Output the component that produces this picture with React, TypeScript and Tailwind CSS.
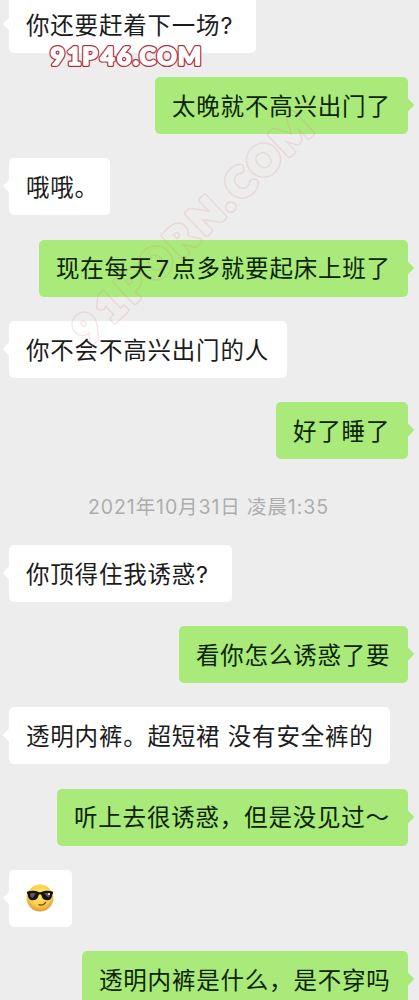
import clsx from 'clsx';

interface Message {
  id: number;
  mine?: boolean;
  text?: string;
  width: string;
}

const earlier: Message[] = [
  { id: 1, text: '你还要赶着下一场?', width: 'w-[247px]' },
  { id: 2, mine: true, text: '太晚就不高兴出门了', width: 'w-[253px]' },
  { id: 3, text: '哦哦。', width: 'w-[101px]' },
  { id: 4, mine: true, text: '现在每天7点多就要起床上班了', width: 'w-[369px]' },
  { id: 5, text: '你不会不高兴出门的人', width: 'w-[278px]' },
  { id: 6, mine: true, text: '好了睡了', width: 'w-[132px]' },
];

const later: Message[] = [
  { id: 7, text: '你顶得住我诱惑?', width: 'w-[223px]' },
  { id: 8, mine: true, text: '看你怎么诱惑了要', width: 'w-[229px]' },
  { id: 9, text: '透明内裤。超短裙 没有安全裤的', width: 'w-[381px]' },
  { id: 10, mine: true, text: '听上去很诱惑，但是没见过～', width: 'w-[351px]' },
  { id: 11, width: 'w-[63px]' },
  { id: 12, mine: true, text: '透明内裤是什么，是不穿吗', width: 'w-[326px]' },
];

function CoolFace() {
  return (
    <svg viewBox="0 0 28 28" className="size-7" role="img" aria-label="cool">
      <defs>
        <radialGradient id="face" cx="50%" cy="38%" r="62%">
          <stop offset="0%" stopColor="#ffe873" />
          <stop offset="65%" stopColor="#fad04b" />
          <stop offset="100%" stopColor="#e0973a" />
        </radialGradient>
      </defs>
      <circle cx="14" cy="14" r="13.4" fill="url(#face)" />
      <path d="M13 20.6c2.6 1 5.2.2 6.6-2.2" fill="none" stroke="#7a4a12" strokeWidth="1.3" strokeLinecap="round" />
      <path
        d="M1 7.8c4-1.3 8.5-1.2 11.5.1 1 .4 2 .4 3 0 3-1.3 7.5-1.4 11.5-.1v2l-.9.6c-.2 3.8-1.7 5.8-5.3 5.8-3.4 0-4.8-2.2-5.5-5.2-.3-.9-2.3-.9-2.6 0-.7 3-2.1 5.2-5.5 5.2-3.6 0-5.1-2-5.3-5.8L1 9.8z"
        fill="#15130f"
      />
      <path d="M4 9.5c2-.6 4-.6 6 .1l-3.5 4.6C4.8 13.7 4 12 4 9.5z" fill="#5c5a57" />
      <path d="M18 9.5c2-.6 4-.6 6-.1 0 2-.5 3.5-1.6 4.2z" fill="#5c5a57" />
      <circle cx="23" cy="10" r="1" fill="#fff" />
    </svg>
  );
}

function Tail({ mine }: { mine?: boolean }) {
  return (
    <svg
      viewBox="0 0 8 16"
      className={clsx('absolute top-[20px] h-4 w-2', mine ? '-right-[7px]' : '-left-[7px] rotate-180')}
    >
      <path d="M0 0.5L6.6 7.2Q7.4 8 6.6 8.8L0 15.5z" fill={mine ? '#a9ea7a' : '#ffffff'} />
    </svg>
  );
}

function Bubble({ mine, text, width }: Message) {
  return (
    <div className={clsx('flex', mine ? 'justify-end' : 'justify-start')}>
      <div
        className={clsx(
          'relative flex h-[57px] shrink-0 items-center rounded-[5px] pl-[17px]',
          width,
          mine ? 'bg-[#a9ea7a] text-[#0c2404]' : 'bg-white text-[#1c1c1c]',
        )}
      >
        <Tail mine={mine} />
        {text ? (
          <p className="whitespace-pre pt-0.5 text-[23.5px] leading-none tracking-[0.8px]">
            {text.split('7').map((part, i) => (
              <span key={i}>
                {i > 0 && <span className="inline-block w-[19px] text-center">7</span>}
                {part}
              </span>
            ))}
          </p>
        ) : (
          <CoolFace />
        )}
      </div>
    </div>
  );
}

// Letters are placed by their centers so the outlines can sit tightly together.
const banner = {
  x: '57.5 74 90 107.500 124 136 147.500 167 189.500',
  y: 65,
  fontSize: 24.5,
  fontWeight: 900,
  textAnchor: 'middle' as const,
  strokeLinejoin: 'round' as const,
};

const diagonal = {
  x: '0 31 61 94 128 163 187 210 243 281',
  y: 14,
  fontSize: 40,
  fontWeight: 900,
  textAnchor: 'middle' as const,
  strokeLinejoin: 'round' as const,
};

function Watermarks() {
  return (
    <svg viewBox="0 0 419 400" className="pointer-events-none absolute left-0 top-0 h-[400px] w-[419px] font-['Lato',sans-serif]">
      <defs>
        <mask id="outline" maskUnits="userSpaceOnUse" x="-40" y="-50" width="400" height="100">
          <text {...diagonal} fill="#fff" stroke="#fff" strokeWidth="5.4">91PORN.COM</text>
          <text {...diagonal} fill="#000" stroke="#000" strokeWidth="2.6">91PORN.COM</text>
        </mask>
      </defs>
      <g transform="translate(88 328) rotate(-43.6)">
        <rect x="-40" y="-50" width="400" height="100" fill="#dc8282" opacity="0.2" mask="url(#outline)" />
      </g>
      <text {...banner} fill="#b02a38" stroke="#b02a38" strokeWidth="4">91P46.COM</text>
      <text {...banner} fill="#fff" stroke="#fff" strokeWidth="1.6">91P46.COM</text>
    </svg>
  );
}

export default function App() {
  return (
    <main className="relative h-[1000px] w-[419px] overflow-hidden bg-[#ededed] font-['Inter','Noto_Sans_CJK_SC',sans-serif]">
      <div className="-mt-1 flex flex-col pl-[9px] pr-[11px]">
        <section className="flex flex-col gap-[24.2px]">
          {earlier.map((m) => (
            <Bubble key={m.id} {...m} />
          ))}
        </section>
        <time className="flex h-[86px] items-center justify-center whitespace-pre pt-3 text-[19.5px] tracking-[0.9px] text-[#adadad]">
          2021年10月31日 凌晨1:35
        </time>
        <section className="flex flex-col gap-[24.2px]">
          {later.map((m) => (
            <Bubble key={m.id} {...m} />
          ))}
        </section>
      </div>
      <Watermarks />
    </main>
  );
}
